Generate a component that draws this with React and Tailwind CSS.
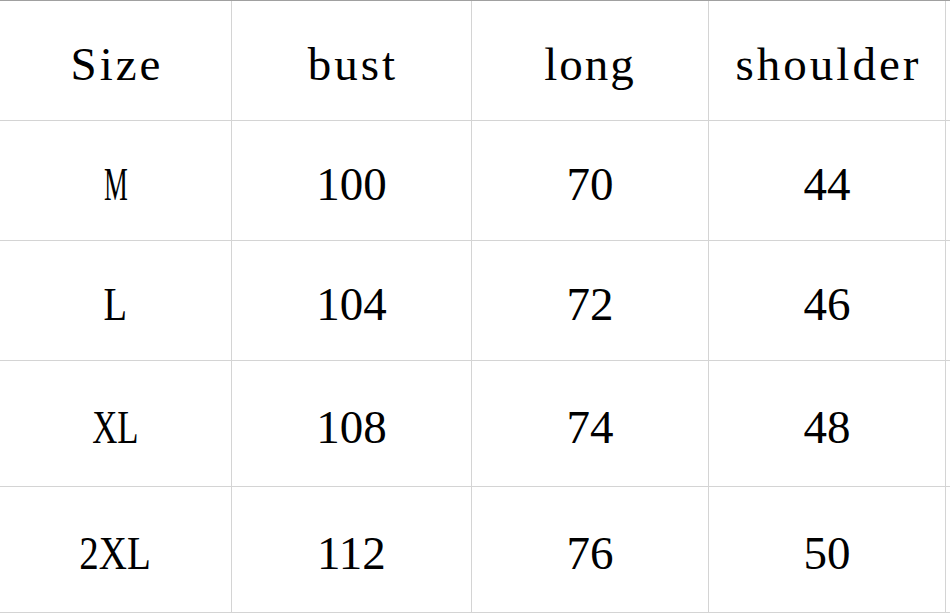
const header = ["Size", "bust", "long", "shoulder"];

const rows = [
  { size: "M", squeeze: "scale-x-[0.57]", bust: "100", long: "70", shoulder: "44", h: "h-[120px]" },
  { size: "L", squeeze: "scale-x-[0.82]", bust: "104", long: "72", shoulder: "46", h: "h-[120px]" },
  { size: "XL", squeeze: "scale-x-[0.74]", bust: "108", long: "74", shoulder: "48", h: "h-[126px]" },
  { size: "2XL", squeeze: "scale-x-[0.83]", bust: "112", long: "76", shoulder: "50", h: "h-[126px]" },
];

const widths = ["w-[232px]", "w-[240px]", "w-[237px]", "w-[237px]"];

function Cell({ w, children }) {
  return (
    <div className={`${w} shrink-0 h-full border-r border-[#d4d4d4] flex items-center justify-center pt-2`}>
      {children}
    </div>
  );
}

export default function App() {
  return (
    <div
      className="w-[950px] h-[614px] bg-white text-black text-[47px] leading-none overflow-hidden"
      style={{ fontFamily: '"Liberation Serif", "Times New Roman", serif' }}
    >
      <div className="border-t border-[#a0a0a0]">
        {/* header row */}
        <div className="flex h-[120px] border-b border-[#d4d4d4]">
          {header.map((label, i) => (
            <Cell key={label} w={widths[i]}>
              <span className={i === 2 ? "tracking-[2px]" : "tracking-[3px] pl-[3px]"}>{label}</span>
            </Cell>
          ))}
        </div>

        {rows.map((r) => (
          <div key={r.size} className={`flex ${r.h} border-b border-[#d4d4d4]`}>
            <Cell w={widths[0]}>
              <span className={`inline-block ${r.squeeze}`}>{r.size}</span>
            </Cell>
            <Cell w={widths[1]}>{r.bust}</Cell>
            <Cell w={widths[2]}>{r.long}</Cell>
            <Cell w={widths[3]}>{r.shoulder}</Cell>
          </div>
        ))}
      </div>
    </div>
  );
}
